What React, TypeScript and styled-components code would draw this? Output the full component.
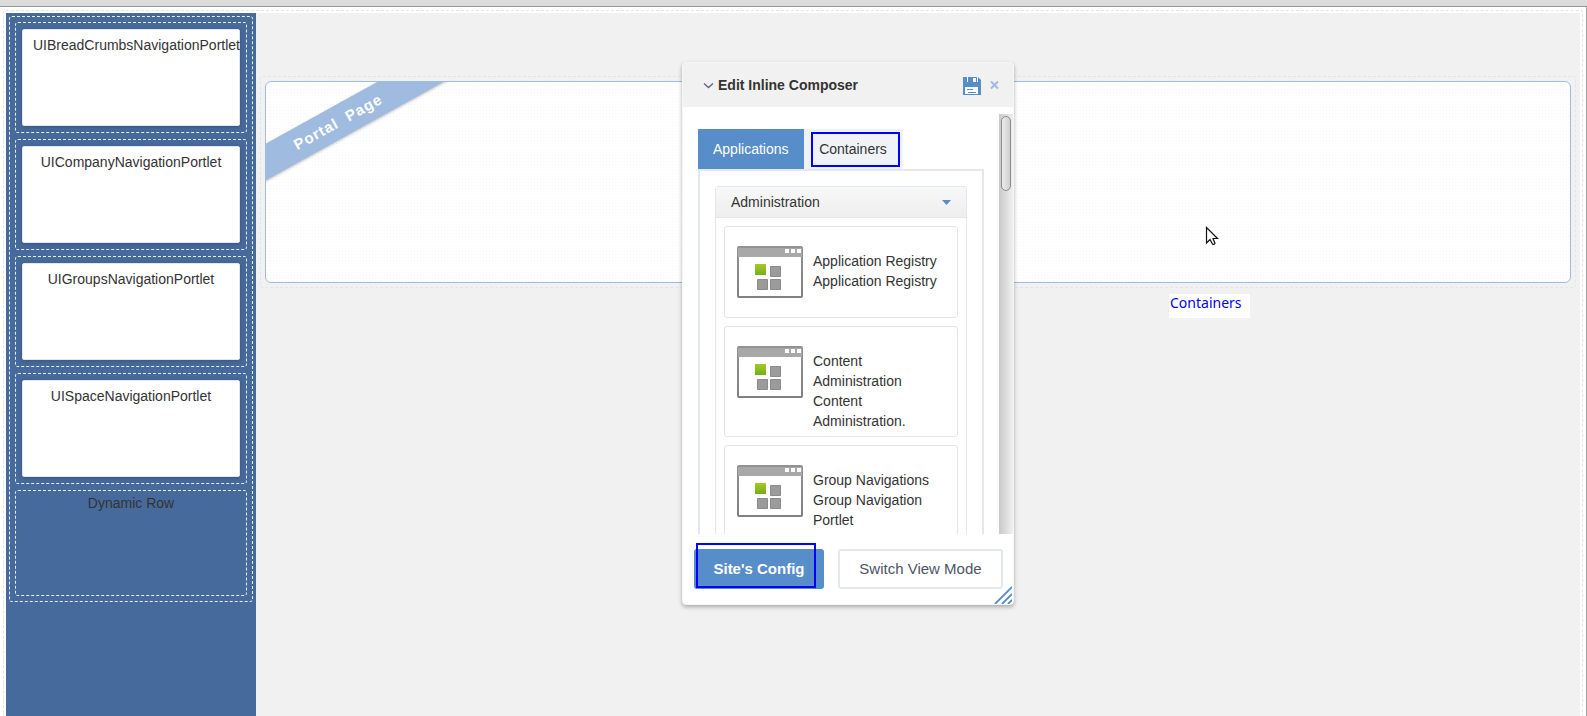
import React, { useState } from "react";
import styled, { createGlobalStyle } from "styled-components";

const GlobalStyle = createGlobalStyle`
  * { box-sizing: border-box; }
  html, body, #root { height: 100%; }
  body {
    margin: 0;
    overflow: hidden;
    background: #fff;
    color: #333;
    font: 14px/20px "Liberation Sans", Helvetica, Arial, sans-serif;
  }
  button { font: inherit; cursor: pointer; }
`;

const Page = styled.div`
  position: relative;
  display: flex;
  flex-direction: column;
  min-height: 100%;
  overflow: hidden;
`;

const TopBar = styled.div`
  height: 7px;
  background: #dcdcdc;
  border-bottom: 1px solid #979797;
`;

const Frame = styled.div`
  flex: 1;
  display: flex;
  padding: 3px 3px 0;
  border-right: 1px solid #a3a3a3;
`;

const Workspace = styled.div`
  flex: 1;
  display: flex;
  padding: 2px 2px 0;
  border: 1px dashed #e1e4e8;
  border-bottom: 0;
  border-radius: 3px 3px 0 0;
`;

const Sidebar = styled.aside`
  width: 250px;
  padding: 3px;
  background: #476a9c;
`;

const Dashed = styled.div`
  border: 1px dashed #e6edf5;
  border-radius: 3px;
`;

const Stack = styled(Dashed)`
  display: flex;
  flex-direction: column;
  gap: 6px;
  padding: 5px;
`;

const Slot = styled(Dashed)`
  padding: 6px;
`;

const Portlet = styled.div`
  display: flex;
  justify-content: center;
  height: 97px;
  padding: 5px 10px;
  background: #fff;
  border: 1px solid #dfe6ee;
  border-radius: 2px;
  box-shadow: 0 1px 4px rgba(30, 50, 90, 0.4);
`;

const PortletName = styled.span`
  min-width: 0;
  white-space: nowrap;
`;

const DynamicRow = styled(Dashed)`
  height: 106px;
  padding-top: 2px;
  text-align: center;
`;

const Main = styled.main`
  flex: 1;
  padding: 63px 4px 0 4px;
  background: #f1f1f1;
`;

const PageSlot = styled(Dashed)`
  border-color: #e1e5ea;
  padding: 4px;
`;

const PagePanel = styled.section`
  position: relative;
  height: 202px;
  overflow: hidden;
  border: 1px solid #9fbce0;
  border-radius: 6px;
  background-color: #fff;
  background-image: radial-gradient(#f8f8f8 1px, transparent 1px);
  background-size: 3px 3px;
`;

const Ribbon = styled.div`
  position: absolute;
  top: 24px;
  left: -58px;
  width: 260px;
  height: 32px;
  transform: rotate(-29deg);
  background: #9fbce0;
  box-shadow: 0 1px 3px rgba(0, 0, 0, 0.25);
  color: #fff;
  font-size: 15px;
  font-weight: bold;
  line-height: 32px;
  letter-spacing: 1px;
  text-align: center;
  white-space: pre;
`;

const Tooltip = styled.a`
  position: absolute;
  top: 294px;
  left: 1169px;
  width: 81px;
  height: 24px;
  padding-left: 1px;
  background: #fff;
  color: #00f;
  font-family: "Noto Sans", "DejaVu Sans", sans-serif;
  font-size: 14px;
  line-height: 18px;
  text-decoration: none;
`;

const Pointer = styled.svg`
  position: absolute;
  top: 225px;
  left: 1205px;
`;

const Composer = styled.section`
  position: absolute;
  top: 62px;
  left: 682px;
  width: 332px;
  display: flex;
  flex-direction: column;
  border: 1px solid #f6f6f6;
  border-radius: 4px;
  background: #fff;
  box-shadow: 0 2px 4px rgba(0, 0, 0, 0.3);
`;

const ComposerHeader = styled.header`
  display: flex;
  align-items: center;
  height: 44px;
  padding: 0 13px 0 20px;
  border-radius: 3px 3px 0 0;
  background: #f1f1f1;
`;

const ComposerTitle = styled.h2`
  flex: 1;
  margin: 0 0 0 4px;
  font-size: 14px;
  line-height: 20px;
`;

const IconButton = styled.button`
  display: flex;
  padding: 0;
  border: 0;
  background: none;
`;

const HeaderTools = styled.div`
  display: flex;
  align-items: center;
  gap: 8px;
`;

const ScrollArea = styled.div`
  display: flex;
  height: 420px;
  margin-top: 7px;
  overflow: hidden;
`;

const ScrollContent = styled.div`
  flex: 1;
  padding: 15px 15px 0;
`;

const Track = styled.div`
  width: 14px;
  padding: 2px;
  background: linear-gradient(to right, #c9c9c9, #f0f0f0);
`;

const Thumb = styled.div`
  height: 75px;
  border: 1px solid #8b8b8b;
  border-radius: 5px;
  background: linear-gradient(to right, #ececec, #cfcfcf);
`;

const Tabs = styled.div`
  display: flex;
`;

const Tab = styled.button<{ $active?: boolean }>`
  position: relative;
  height: 40px;
  min-width: 99px;
  padding: 0 15px;
  border: 0;
  background: ${(p) => (p.$active ? "#578dc9" : "#eff3f7")};
  color: ${(p) => (p.$active ? "#fff" : "#333")};
`;

const TabMark = styled.span`
  position: absolute;
  inset: 3px 3px 2px 7px;
  border: 2px solid #00f;
`;

const TabPanel = styled.div`
  width: 286px;
  padding: 15px;
  border: 2px solid #e1e8ee;
`;

const Category = styled.div`
  border: 1px solid #e1e8ee;
  border-radius: 3px;
`;

const CategoryToggle = styled.button`
  display: flex;
  align-items: center;
  justify-content: space-between;
  width: 100%;
  height: 31px;
  padding: 0 15px;
  border: 0;
  border-bottom: 1px solid #e1e8ee;
  background: linear-gradient(#f8f8f8, #eee);
  color: #333;
`;

const AppList = styled.div`
  display: flex;
  flex-direction: column;
  gap: 8px;
  padding: 8px;
`;

const AppCard = styled.article`
  display: flex;
  align-items: flex-start;
  gap: 10px;
  min-height: 92px;
  padding: 19px 12px 5px;
  border: 1px solid #e5e5e5;
  border-radius: 3px;
`;

const AppText = styled.div`
  flex: 1;
  padding-top: 5px;
`;

const Footer = styled.footer`
  display: flex;
  gap: 14px;
  padding: 15px 10px 15px 11px;
`;

const FooterButton = styled.button<{ $primary?: boolean }>`
  position: relative;
  flex: ${(p) => (p.$primary ? "0 0 130px" : "1")};
  height: 40px;
  border: 2px solid ${(p) => (p.$primary ? "#578dc9" : "#e1e8ee")};
  border-radius: 3px;
  background: ${(p) => (p.$primary ? "#578dc9" : "#fff")};
  color: ${(p) => (p.$primary ? "#fff" : "#4d5466")};
  font-size: 15px;
  font-weight: ${(p) => (p.$primary ? "bold" : "normal")};
`;

const ButtonMark = styled.span`
  position: absolute;
  inset: -8px 6px -1px 0;
  border: 2px solid #00f;
`;

const ResizeGrip = styled.svg`
  position: absolute;
  right: 1px;
  bottom: 0;
`;

const AppIcon = () => (
  <svg width="66" height="52" viewBox="0 0 66 52" aria-hidden="true">
    <defs>
      <linearGradient id="leaf" x1="0" y1="0" x2="0" y2="1">
        <stop offset="0" stopColor="#a5c927" />
        <stop offset="1" stopColor="#72b01c" />
      </linearGradient>
      <linearGradient id="shell" x1="0" y1="0" x2="0" y2="1">
        <stop offset="0" stopColor="#929292" />
        <stop offset="1" stopColor="#808080" />
      </linearGradient>
    </defs>
    <rect width="66" height="52" rx="2" fill="url(#shell)" />
    <rect x="1" y="2" width="64" height="9" fill="#a8a8a8" />
    <rect x="2" y="11" width="62" height="39" fill="#fff" />
    <path d="M48 3h4v4h-4zM54 3h4v4h-4zM60 3h4v4h-4z" fill="#fff" />
    <rect x="18" y="18" width="11" height="11" fill="url(#leaf)" />
    <path d="M33.500 20.500h10v10h-10zM20.500 33.500h10v10h-10zM33.500 33.500h10v10h-10z" fill="#9b9b9b" stroke="#8b8b8b" />
  </svg>
);

const SaveIcon = () => (
  <svg width="18" height="19" viewBox="0 0 18 19" aria-hidden="true">
    <path d="M0 1h15l3 3v15H0z" fill="#578dc9" />
    <path d="M4 1h1v5H4zM10 2h3v4h-3zM14 1h1v5h-1zM2 11h13v7H2z" fill="#fff" />
    <path d="M4 13.500h6M5 16.500h8" stroke="#578dc9" />
  </svg>
);

const portlets = [
  "UIBreadCrumbsNavigationPortlet",
  "UICompanyNavigationPortlet",
  "UIGroupsNavigationPortlet",
  "UISpaceNavigationPortlet",
];

const applications = [
  { name: "Application Registry", description: "Application Registry" },
  { name: "Content Administration", description: "Content Administration." },
  { name: "Group Navigations", description: "Group Navigation Portlet" },
];

export default function App() {
  const [open, setOpen] = useState(true);
  return (
    <>
      <GlobalStyle />
      <Page>
        <TopBar />
        <Frame>
          <Workspace>
            <Sidebar>
              <Stack>
                {portlets.map((name) => (
                  <Slot key={name}>
                    <Portlet>
                      <PortletName>{name}</PortletName>
                    </Portlet>
                  </Slot>
                ))}
                <DynamicRow>Dynamic Row</DynamicRow>
              </Stack>
            </Sidebar>
            <Main>
              <PageSlot>
                <PagePanel>
                  <Ribbon>{"Portal  Page"}</Ribbon>
                </PagePanel>
              </PageSlot>
            </Main>
          </Workspace>
        </Frame>

        <Tooltip href="#containers">Containers</Tooltip>
        <Pointer width="14" height="22" viewBox="0 0 14 22" aria-hidden="true">
          <path
            d="M1.500 2.500v15.500l3.500-3.500 2.500 4.500q1.500 1 2.500-.5l-2-5h4.500z"
            fill="#fff"
            stroke="#111"
            strokeWidth="1.200"
          />
        </Pointer>

        <Composer aria-label="Edit Inline Composer">
          <ComposerHeader>
            <IconButton aria-label="Collapse">
              <svg width="11" height="10" viewBox="0 0 11 10">
                <path d="M1 3.500l4.500 4 4.500-4" fill="none" stroke="#5f6b80" strokeWidth="1.400" />
              </svg>
            </IconButton>
            <ComposerTitle>Edit Inline Composer</ComposerTitle>
            <HeaderTools>
              <IconButton aria-label="Save">
                <SaveIcon />
              </IconButton>
              <IconButton aria-label="Close">
                <svg width="11" height="10" viewBox="0 0 11 10">
                  <path d="M2 1.500l7 7M9 1.500l-7 7" stroke="#9fbce0" strokeWidth="2" />
                </svg>
              </IconButton>
            </HeaderTools>
          </ComposerHeader>
          <ScrollArea>
            <ScrollContent>
              <Tabs role="tablist">
                <Tab role="tab" aria-selected $active>
                  Applications
                </Tab>
                <Tab role="tab" aria-selected={false} id="containers">
                  Containers
                  <TabMark />
                </Tab>
              </Tabs>
              <TabPanel role="tabpanel">
                <Category>
                  <CategoryToggle aria-expanded={open} onClick={() => setOpen(!open)}>
                    Administration
                    <svg width="9" height="5" viewBox="0 0 9 5" aria-hidden="true">
                      <path d="M0 0h9L4.500 5z" fill="#578dc9" />
                    </svg>
                  </CategoryToggle>
                  {open && (
                    <AppList>
                      {applications.map((app) => (
                        <AppCard key={app.name}>
                          <AppIcon />
                          <AppText>
                            <div>{app.name}</div>
                            <div>{app.description}</div>
                          </AppText>
                        </AppCard>
                      ))}
                    </AppList>
                  )}
                </Category>
              </TabPanel>
            </ScrollContent>
            <Track>
              <Thumb />
            </Track>
          </ScrollArea>
          <Footer>
            <FooterButton $primary>
              Site's Config
              <ButtonMark />
            </FooterButton>
            <FooterButton>Switch View Mode</FooterButton>
          </Footer>
          <ResizeGrip width="18" height="18" viewBox="0 0 18 18" aria-hidden="true">
            <path d="M1 18L18 1M8 18L18 8M14 18l4-4" stroke="#578dc9" strokeWidth="1.800" />
          </ResizeGrip>
        </Composer>
      </Page>
    </>
  );
}
